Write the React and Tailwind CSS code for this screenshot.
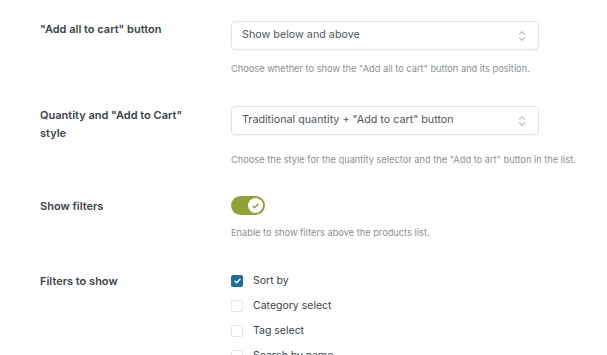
import React from 'react';

const font = { fontFamily: 'Inter, "Noto Sans", sans-serif' };

const Chevrons = () => (
  <svg width="8" height="12" viewBox="0 0 8 12" fill="none" stroke="#b5b8bd" strokeWidth="1.1" strokeLinecap="round" strokeLinejoin="round">
    <path d="M1.5 4.2 L4 1.7 L6.5 4.2" />
    <path d="M1.5 7.8 L4 10.3 L6.5 7.8" />
  </svg>
);

const SelectBox = ({ value }) => (
  <div className="w-[308px] h-[29px] flex items-center justify-between pl-[10px] pr-[12px] bg-white border border-[#e2e4e7] rounded-[4px] shadow-[0_1px_1px_rgba(0,0,0,0.03)]">
    <span className="text-[10.75px] text-[#50575e]">{value}</span>
    <Chevrons />
  </div>
);

const Help = ({ children, className = '' }) => (
  <p className={`text-[9.25px] leading-[13px] text-[#8c8f94] ${className}`}>{children}</p>
);

const Label = ({ children, className = '' }) => (
  <div className={`w-[191px] pr-[40px] text-[11px] leading-[18px] font-semibold text-[#3c434a] ${className}`}>{children}</div>
);

const Toggle = () => (
  <div className="w-[34px] h-[19px] rounded-full bg-[#8fa23a] flex items-center justify-end pr-[2px]">
    <div className="w-[15px] h-[15px] rounded-full bg-white flex items-center justify-center">
      <svg width="7" height="6" viewBox="0 0 7 6" fill="none" stroke="#8fa23a" strokeWidth="1.4" strokeLinecap="round" strokeLinejoin="round">
        <path d="M1 3.2 L2.7 4.8 L6 1.2" />
      </svg>
    </div>
  </div>
);

const CheckItem = ({ label, checked }) => (
  <div className="h-[25px] flex items-center gap-[10px]">
    {checked ? (
      <div className="w-[12px] h-[12px] rounded-[2px] bg-[#1f6e9c] flex items-center justify-center">
        <svg width="7" height="6" viewBox="0 0 7 6" fill="none" stroke="white" strokeWidth="1.4" strokeLinecap="round" strokeLinejoin="round">
          <path d="M1 3.2 L2.7 4.8 L6 1.2" />
        </svg>
      </div>
    ) : (
      <div className="w-[12px] h-[12px] rounded-[2px] border border-[#e4e5e7] bg-white" />
    )}
    <span className="text-[10.5px] text-[#3c434a]">{label}</span>
  </div>
);

export default function App() {
  return (
    <div className="w-[607px] h-[355px] overflow-hidden bg-white pl-[40px] pt-[21px]" style={font}>
      <div className="flex">
        <Label className="-mt-[1px]">"Add all to cart" button</Label>
        <div>
          <SelectBox value="Show below and above" />
          <Help className="mt-[12px]">Choose whether to show the "Add all to cart" button and its position.</Help>
        </div>
      </div>

      <div className="flex mt-[31px]">
        <Label>Quantity and "Add to Cart" style</Label>
        <div>
          <SelectBox value='Traditional quantity + "Add to cart" button' />
          <Help className="mt-[18px]">Choose the style for the quantity selector and the "Add to art" button in the list.</Help>
        </div>
      </div>

      <div className="flex mt-[30px]">
        <Label className="pt-[1px]">Show filters</Label>
        <div>
          <Toggle />
          <Help className="mt-[11px]">Enable to show filters above the products list.</Help>
        </div>
      </div>

      <div className="flex mt-[29px]">
        <Label className="pt-[4px]">Filters to show</Label>
        <div>
          <CheckItem label="Sort by" checked />
          <CheckItem label="Category select" />
          <CheckItem label="Tag select" />
          <CheckItem label="Search by name" />
        </div>
      </div>
    </div>
  );
}
